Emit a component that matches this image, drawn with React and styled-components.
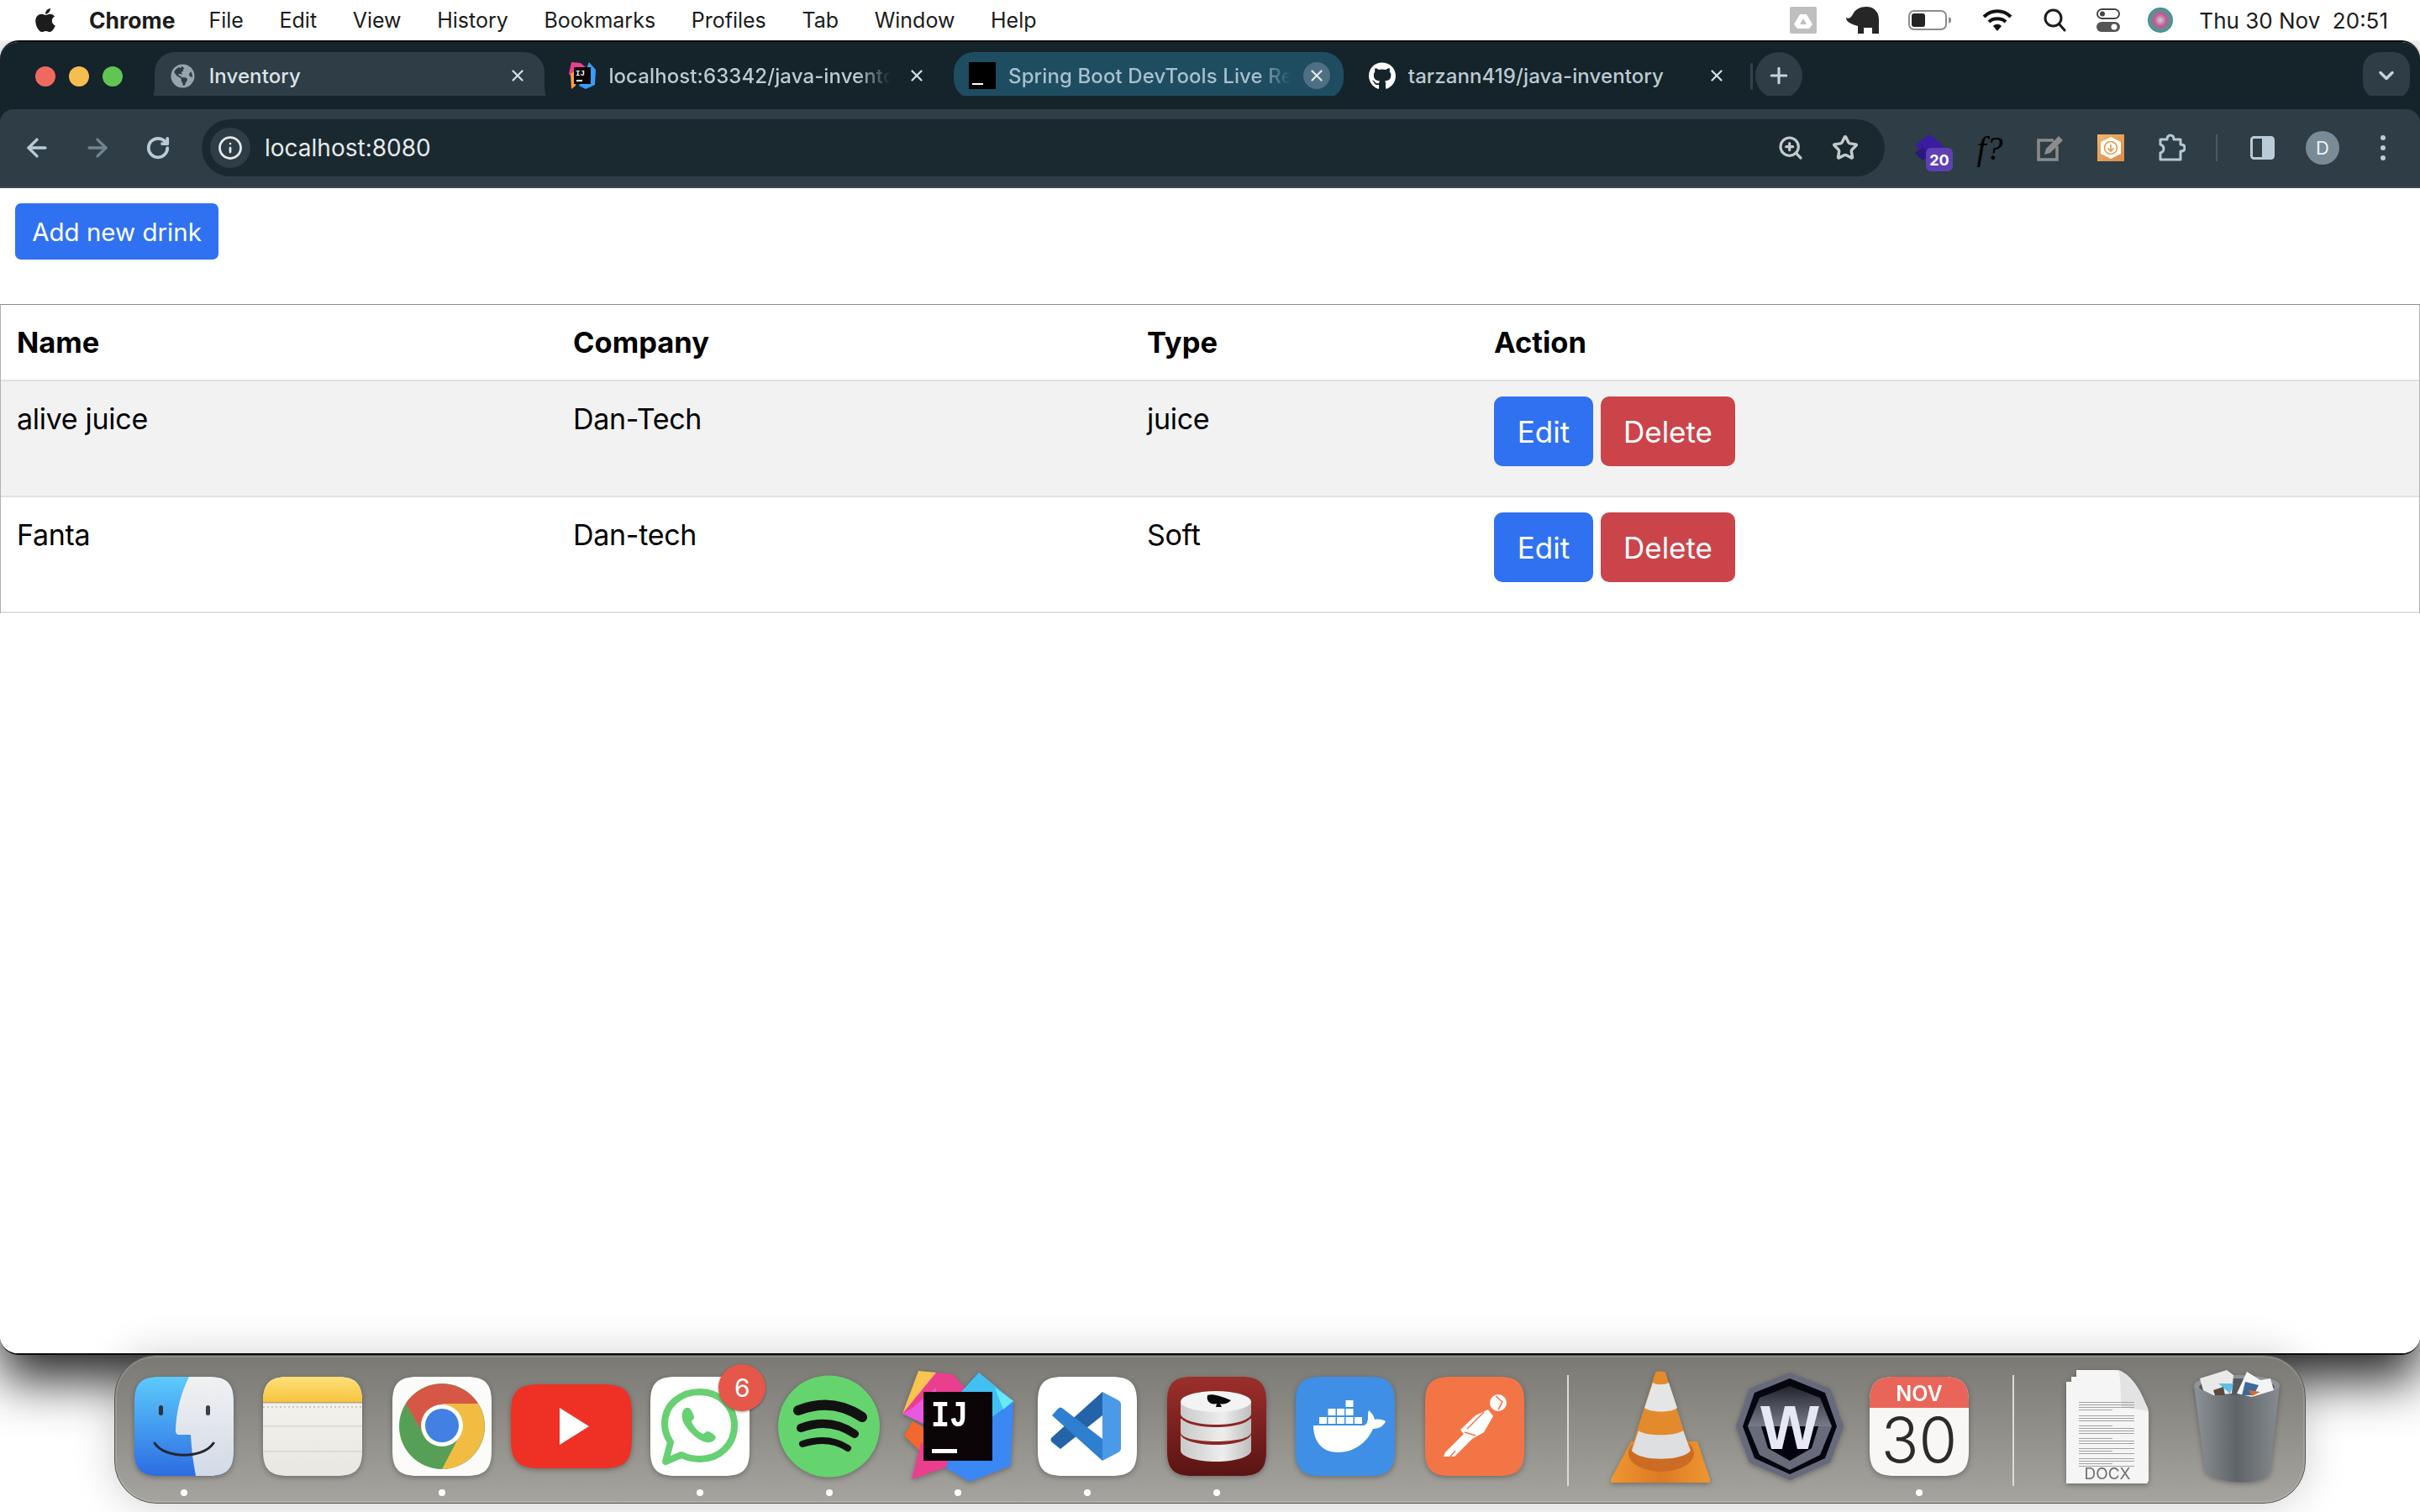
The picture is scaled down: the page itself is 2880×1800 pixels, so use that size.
import React from "react";
import styled, { createGlobalStyle } from "styled-components";
import { FaApple, FaGithub, FaGlobeAmericas } from "react-icons/fa";
import { ArrowLeft, ArrowRight, ChevronDown, Info, Plus, RotateCw, Star, X, ZoomIn } from "lucide-react";

const GlobalStyle = createGlobalStyle`
  html, body {
    margin: 0;
    padding: 0;
    background: #fff;
  }
  * {
    box-sizing: border-box;
  }
`;

const Screen = styled.div`
  width: 2880px;
  height: 1800px;
  display: flex;
  flex-direction: column;
  overflow: hidden;
  background: #fff;
  font-family: Inter, "Liberation Sans", sans-serif;
`;

/* ---------- mac menu bar ---------- */

const MenuBar = styled.div`
  position: relative;
  z-index: 3;
  height: 48px;
  flex: none;
  display: flex;
  align-items: center;
  padding: 0 38px 0 38px;
  background: #fff;
  color: #1c1c1c;
  font-size: 25px;
`;

const AppName = styled.span`
  font-size: 26.5px;
  font-weight: 700;
  margin: 0 40px 0 36px;
`;

const MenuItems = styled.div`
  display: flex;
  gap: 42.6px;
`;

const StatusArea = styled.div`
  margin-left: auto;
  display: flex;
  align-items: center;
`;

const StatusSlot = styled.div`
  width: ${(p) => p.$w}px;
  display: flex;
  justify-content: center;
`;

const Clock = styled.span`
  margin-left: 15px;
  font-size: 26px;
  white-space: pre;
`;

/* ---------- browser window ---------- */

const Window = styled.div`
  position: relative;
  z-index: 1;
  height: 1565px;
  flex: none;
  display: flex;
  flex-direction: column;
  overflow: hidden;
  background: #fff;
  border: 0 solid #0c0c0c;
  border-width: 2px 0;
  border-radius: 22px;
  box-shadow: 0 30px 60px rgba(0, 0, 0, 0.85);
`;

const TabStrip = styled.div`
  height: 80px;
  flex: none;
  display: flex;
  align-items: flex-start;
  gap: 11.7px;
  padding: 12px 12px 0 0;
  background: #15232a;
`;

const Lights = styled.div`
  width: 172px;
  height: 58px;
  flex: none;
  display: flex;
  align-items: center;
  gap: 16px;
  padding-left: 42px;
`;

const Light = styled.span`
  width: 24px;
  height: 24px;
  border-radius: 50%;
  background: ${(p) => p.$color};
`;

const Tab = styled.div`
  position: relative;
  width: 464px;
  height: ${(p) => (p.$active ? 68 : 56)}px;
  padding: ${(p) => (p.$active ? "0 16px 12px 18px" : "0 16px 0 18px")};
  flex: none;
  display: flex;
  align-items: center;
  gap: 15px;
  border-radius: ${(p) => (p.$active ? "24px 24px 0 0" : p.$group ? "24px" : "0")};
  background: ${(p) => (p.$active ? "#2e3d46" : p.$group ? "#1e4d61" : "transparent")};
  color: ${(p) => (p.$active ? "#dde3e6" : p.$group ? "#a8c0cc" : "#bccad1")};

  ${(p) =>
    p.$active &&
    `
    &::before, &::after {
      content: "";
      position: absolute;
      bottom: 0;
      width: 24px;
      height: 24px;
    }
    &::before {
      left: -24px;
      background: radial-gradient(circle at 0 0, transparent 23.5px, #2e3d46 24px);
    }
    &::after {
      right: -24px;
      background: radial-gradient(circle at 100% 0, transparent 23.5px, #2e3d46 24px);
    }
  `}
`;

const FaviconBox = styled.div`
  width: 32px;
  height: 32px;
  flex: none;
  display: flex;
  align-items: center;
  justify-content: center;
`;

const TerminalIcon = styled.div`
  width: 32px;
  height: 32px;
  display: flex;
  align-items: flex-end;
  padding: 0 0 5px 4px;
  background: #000;

  &::after {
    content: "";
    width: 13px;
    height: 2px;
    background: #fff;
  }
`;

const TabTitle = styled.span`
  flex: 1;
  min-width: 0;
  overflow: hidden;
  white-space: nowrap;
  font-size: 24px;
  font-weight: 500;
  letter-spacing: 0.1px;
  ${(p) =>
    p.$fade &&
    `
    -webkit-mask-image: linear-gradient(90deg, #000 88%, transparent 100%);
    mask-image: linear-gradient(90deg, #000 88%, transparent 100%);
  `}
`;

const TabClose = styled.div`
  width: 32px;
  height: 32px;
  flex: none;
  display: flex;
  align-items: center;
  justify-content: center;
  border-radius: 50%;
  background: ${(p) => (p.$on ? "#4f7084" : "transparent")};
  color: ${(p) => (p.$on ? "#dfe7ec" : "#d5dde1")};
`;

const TabDivider = styled.span`
  width: 3px;
  height: 32px;
  flex: none;
  margin: 13px -9px 0 -3px;
  border-radius: 2px;
  background: #33434c;
`;

const RoundButton = styled.div`
  width: ${(p) => p.$w}px;
  height: 56px;
  flex: none;
  display: flex;
  align-items: center;
  justify-content: center;
  border-radius: ${(p) => p.$r}px;
  margin-left: ${(p) => (p.$end ? "auto" : "0")};
  background: #2e3d46;
  color: #c5d3da;
`;

const Toolbar = styled.div`
  position: relative;
  height: 94px;
  flex: none;
  display: flex;
  align-items: center;
  padding: 0 6px 0 8px;
  background: #2e3d46;
  border-radius: 16px 16px 0 0;
  border-bottom: 2px solid #3c4a53;
  box-shadow: 0 -16px 0 #15232a;
`;

const ToolSlot = styled.div`
  width: ${(p) => p.$w || 72}px;
  height: 68px;
  flex: none;
  position: relative;
  display: flex;
  align-items: center;
  justify-content: center;
  color: ${(p) => p.$color || "#b9cbd6"};
`;

const Omnibox = styled.div`
  width: 2003px;
  height: 68px;
  flex: none;
  display: flex;
  align-items: center;
  margin: 0 17px 0 16px;
  padding: 0 31px 0 10px;
  border-radius: 34px;
  background: #1a2930;
  color: #e6eaec;
`;

const InfoChip = styled.div`
  width: 48px;
  height: 48px;
  flex: none;
  display: flex;
  align-items: center;
  justify-content: center;
  border-radius: 50%;
  background: #2e3d46;
`;

const UrlText = styled.span`
  flex: 1;
  margin-left: 17px;
  font-size: 28px;
`;

const OmniIcons = styled.div`
  display: flex;
  align-items: center;
  gap: 33px;
  color: #c3c9cc;
`;

const ExtBadge = styled.span`
  position: absolute;
  left: 32px;
  top: 34px;
  width: 32px;
  height: 28px;
  display: flex;
  align-items: center;
  justify-content: center;
  border-radius: 6px;
  background: #5f3fb4;
  color: #fff;
  font-size: 18px;
  font-weight: 700;
`;

const FormulaIcon = styled.span`
  font-family: "Liberation Serif", serif;
  font-style: italic;
  font-size: 40px;
  color: #000;
`;

const ToolDivider = styled.span`
  width: 2px;
  height: 32px;
  background: #4a5962;
`;

const Avatar = styled.div`
  width: 40px;
  height: 40px;
  display: flex;
  align-items: center;
  justify-content: center;
  border-radius: 50%;
  background: #7a8b98;
  color: #eef2f4;
  font-size: 22px;
`;

const KebabDot = styled.span`
  width: 6px;
  height: 6px;
  border-radius: 50%;
  background: #b9cbd6;
`;

const Kebab = styled.div`
  display: flex;
  flex-direction: column;
  gap: 6px;
`;

/* ---------- page content ---------- */

const Page = styled.main`
  flex: 1;
  background: #fff;
  color: #000;
`;

const AddBar = styled.div`
  padding: 18px 0 53px 18px;
`;

const Btn = styled.button`
  display: inline-flex;
  align-items: center;
  justify-content: center;
  border: 0;
  font-family: inherit;
  color: #fff;
  background: ${(p) => (p.$danger ? "#cb444a" : "#3071f2")};
  height: ${(p) => (p.$large ? 83 : 67)}px;
  width: ${(p) => p.$w}px;
  font-size: ${(p) => (p.$large ? 35 : 29.5)}px;
  border-radius: ${(p) => (p.$large ? 10 : 7)}px;
  margin-right: ${(p) => (p.$gap ? 9 : 0)}px;
  padding: 0;
`;

const Table = styled.table`
  width: 100%;
  table-layout: fixed;
  border-collapse: separate;
  border-spacing: 0;
  border-top: 1px solid #8e8e8e;
  border-left: 1px solid #b0b0b0;
  border-right: 1px solid #b0b0b0;
`;

const Th = styled.th`
  width: ${(p) => p.$w || "auto"};
  padding: 18px 19px;
  text-align: left;
  font-size: 34.5px;
  line-height: 53px;
  font-weight: 700;
  border-bottom: 2px solid #dee2e6;
`;

const Row = styled.tr`
  background: ${(p) => (p.$striped ? "#f2f2f2" : "#fff")};
`;

const Td = styled.td`
  padding: 18px 19px 35px;
  vertical-align: top;
  font-size: 34px;
  letter-spacing: -0.3px;
  line-height: 53px;
  border-bottom: 2px solid #dee2e6;
`;

const Actions = styled.div`
  display: flex;
`;

/* ---------- dock ---------- */

const DockArea = styled.div`
  position: relative;
  z-index: 2;
  flex: none;
  padding: 0 0 0 136px;
`;

const Dock = styled.div`
  width: 2608px;
  height: 177px;
  display: flex;
  padding: 12px 0 0 5px;
  border-radius: 50px;
  background: linear-gradient(180deg, #7a7974, #a5a49f);
  border: 1px solid #55554f;
  box-shadow: inset 0 0 0 2px rgba(255, 255, 255, 0.12), 0 0 50px rgba(0, 0, 0, 0.2);
`;

const DockSlot = styled.div`
  position: relative;
  width: 153.6px;
  height: 164px;
  flex: none;
  display: grid;
  grid-template-rows: 144px 1fr;
  justify-items: center;
  align-items: center;
`;

const Dot = styled.span`
  width: 8px;
  height: 8px;
  border-radius: 50%;
  background: ${(p) => (p.$on ? "#fff" : "transparent")};
  margin-bottom: 6px;
`;

const DockDivider = styled.div`
  width: ${(p) => p.$w}px;
  flex: none;
  height: 132px;
  margin-top: 11px;
  display: flex;
  justify-content: center;

  &::after {
    content: "";
    width: 2px;
    background: #dcdbd6;
  }
`;

const NotifyBadge = styled.span`
  position: absolute;
  left: 99px;
  top: -2px;
  width: 56px;
  height: 56px;
  display: flex;
  align-items: center;
  justify-content: center;
  border-radius: 50%;
  background: #e5574a;
  color: #fff;
  font-size: 30px;
  box-shadow: 0 1px 3px rgba(0, 0, 0, 0.4);
`;

const DockSvg = styled.svg`
  display: block;
  overflow: visible;
  filter: drop-shadow(0 2px 3px rgba(0, 0, 0, 0.3));
`;

const Sq = ({ children, w = 118, h = 118 }) => (
  <DockSvg width={w} height={h} viewBox={`0 0 ${w} ${h}`}>
    {children}
  </DockSvg>
);

const SQUIRCLE = "M30 0H88C110 0 118 8 118 30V88C118 110 110 118 88 118H30C8 118 0 110 0 88V30C0 8 8 0 30 0Z";

const Finder = () => (
  <Sq>
    <defs>
      <linearGradient id="fBlue" x1="0" y1="0" x2="0" y2="1">
        <stop offset="0" stopColor="#5ccbfb" />
        <stop offset="1" stopColor="#2d6ce3" />
      </linearGradient>
      <linearGradient id="fWhite" x1="0" y1="0" x2="0" y2="1">
        <stop offset="0" stopColor="#f1f1f3" />
        <stop offset="1" stopColor="#d1dae7" />
      </linearGradient>
    </defs>
    <path d={SQUIRCLE} fill="url(#fBlue)" />
    <path
      d="M65 0H88C110 0 118 8 118 30V88C118 110 110 118 88 118H73C70 102 68 88 67 69H54C50 69 49 67 49 63C50 40 55 20 65 0Z"
      fill="url(#fWhite)"
    />
    <rect x="29" y="34" width="5" height="12" rx="2.5" fill="#2b3340" />
    <rect x="85" y="34" width="5" height="12" rx="2.5" fill="#3a3f49" />
    <path d="M24 79C36 98 82 98 94 79" fill="none" stroke="#23272f" strokeWidth="3" strokeLinecap="round" />
  </Sq>
);

const Notes = () => (
  <Sq>
    <defs>
      <linearGradient id="nTop" x1="0" y1="0" x2="0" y2="1">
        <stop offset="0" stopColor="#fde07a" />
        <stop offset="1" stopColor="#f8c33d" />
      </linearGradient>
      <linearGradient id="nBody" x1="0" y1="0" x2="0" y2="1">
        <stop offset="0" stopColor="#f6f5f1" />
        <stop offset="1" stopColor="#e9e7e1" />
      </linearGradient>
    </defs>
    <path d={SQUIRCLE} fill="url(#nBody)" />
    <path d="M30 0H88C110 0 118 8 118 30H0C0 8 8 0 30 0Z" fill="url(#nTop)" />
    <rect y="30" width="118" height="1.5" fill="#b0a680" />
    <line x1="0" x2="118" y1="36" y2="36" stroke="#c8c7c2" strokeWidth="2" strokeDasharray="2 3" />
    <rect y="58" width="118" height="1.5" fill="#d8d6d1" />
    <rect y="88" width="118" height="1.5" fill="#d8d6d1" />
  </Sq>
);

const Chrome = () => (
  <Sq>
    <path d={SQUIRCLE} fill="#fbfbfa" />
    <circle cx="59" cy="59" r="51" fill="#55a056" />
    <path d="M16 32A51 51 0 0 1 102 32H59L38 70Z" fill="#d65745" />
    <path d="M102 32A51 51 0 0 1 59 110L80 70L59 32Z" fill="#f2bc42" />
    <circle cx="59" cy="58" r="25" fill="#fff" />
    <circle cx="59" cy="58" r="20" fill="#4380e4" />
  </Sq>
);

const YouTube = () => (
  <Sq w={144} h={100}>
    <path d="M36 0H108C136 0 144 8 144 36V64C144 92 136 100 108 100H36C8 100 0 92 0 64V36C0 8 8 0 36 0Z" fill="#ee3124" />
    <path d="M58 28L93 50L58 72Z" fill="#fff" />
  </Sq>
);

const WhatsApp = () => (
  <Sq>
    <path d={SQUIRCLE} fill="#fff" />
    <path
      d="M18 101L24 78C18 69 17 63 17 56C17 33 36 18 59 18C82 18 100 35 100 58C100 81 82 98 59 98C50 98 43 96 37 93Z"
      fill="none"
      stroke="#67d072"
      strokeWidth="8"
      strokeLinejoin="round"
    />
    <path
      d="M42 37C38 40 37 44 38 50C40 60 55 76 67 78C72 79 77 76 78 72C78 70 70 64 67 65L63 68C58 67 50 58 49 53L52 49C53 47 48 38 46 37Z"
      fill="#67d072"
    />
  </Sq>
);

const Spotify = () => (
  <Sq w={121} h={122}>
    <circle cx="60.5" cy="61" r="60.5" fill="#65d46e" />
    <g fill="none" stroke="#111" strokeLinecap="round">
      <path d="M24 42Q65 26 100 50" strokeWidth="12" />
      <path d="M27 63Q62 50 91 70" strokeWidth="10" />
      <path d="M29 82Q60 72 83 87" strokeWidth="8" />
    </g>
  </Sq>
);

const IntelliJ = () => (
  <Sq w={132} h={132}>
    <polygon points="19,0 40,2 30,50 0,51" fill="#f9c44f" />
    <polygon points="40,2 60,4 77,23 72,60 0,51" fill="#ea3f8e" />
    <polygon points="12,44 40,20 40,70 0,51" fill="#e858e0" />
    <polygon points="2,77 12,60 30,70 25,100" fill="#f2682f" />
    <polygon points="11,129 22,85 60,112" fill="#ea3f8e" />
    <polygon points="91,2 132,36 129,113 80,132 52,116 70,25" fill="#3b88f5" />
    <polygon points="91,2 132,36 100,60 70,25" fill="#42c0f2" />
    <polygon points="132,36 110,20 120,46" fill="#68e8fa" />
    <rect x="25" y="25" width="82" height="82" fill="#0b0508" />
    <text
      x="34"
      y="66"
      fontFamily="Liberation Mono, monospace"
      fontWeight="700"
      fontSize="44"
      fill="#fff"
      textLength="44"
      lengthAdjust="spacingAndGlyphs"
    >
      IJ
    </text>
    <rect x="35" y="93" width="30" height="5" fill="#fff" />
  </Sq>
);

const VsCode = () => (
  <Sq>
    <path d={SQUIRCLE} fill="#fff" />
    <path d="M77 18V46L27 86L17 78C15 76 15 74 17 72Z" fill="#2563a8" />
    <path d="M17 46L24 38C26 36 28 36 30 38L77 74V100Z" fill="#2f7fd0" />
    <path d="M77 18L96 28C98 29 99 31 99 33V85C99 87 98 89 96 90L77 100Z" fill="#4a9ae8" />
  </Sq>
);

const SequelAce = () => (
  <Sq>
    <defs>
      <linearGradient id="sBg" x1="0" y1="0" x2="0" y2="1">
        <stop offset="0" stopColor="#9c2f2b" />
        <stop offset="1" stopColor="#5a1413" />
      </linearGradient>
      <linearGradient id="sCyl" x1="0" y1="0" x2="1" y2="0">
        <stop offset="0" stopColor="#c9c9c9" />
        <stop offset="0.6" stopColor="#eeeeee" />
        <stop offset="1" stopColor="#bdbdbd" />
      </linearGradient>
    </defs>
    <path d={SQUIRCLE} fill="url(#sBg)" />
    <path d="M16 68H100V88C100 95 81 101 58 101C35 101 16 95 16 88Z" fill="url(#sCyl)" />
    <path d="M16 48H100V68C100 75 81 81 58 81C35 81 16 75 16 68Z" fill="#8c2623" />
    <path d="M16 50H100V66C100 73 81 77 58 77C35 77 16 73 16 66Z" fill="url(#sCyl)" />
    <path d="M16 29H100V47C100 54 81 60 58 60C35 60 16 54 16 47Z" fill="#8c2623" />
    <path d="M16 29H100V44C100 51 81 57 58 57C35 57 16 51 16 44Z" fill="url(#sCyl)" />
    <ellipse cx="58" cy="29.5" rx="42" ry="12.5" fill="#f3f3f3" />
    <path d="M48 22C53 20 62 22 76 28C71 33 66 33 63 32L65 36H58L59 32C52 34 46 29 48 22Z" fill="#0a0a0a" />
  </Sq>
);

const Docker = () => (
  <Sq>
    <path d={SQUIRCLE} fill="#3f8fe6" />
    <g fill="#fff">
      {[28, 38.5, 49, 59.5, 70].map((x) => (
        <rect key={x} x={x} y="48" width="9" height="8" />
      ))}
      {[38.5, 49, 59.5].map((x) => (
        <rect key={x} x={x} y="38" width="9" height="8" />
      ))}
      <rect x="59.5" y="28" width="9" height="8" />
      <path d="M21 58H80C84 58 86 54 86 48C86 44 86 42 87 40C91 43 93 47 94 51C99 50 104 51 107 53C104 60 97 62 92 62C85 78 70 90 50 90C30 90 21 75 21 58Z" />
    </g>
  </Sq>
);

const Postman = () => (
  <Sq>
    <path d={SQUIRCLE} fill="#f37546" />
    <circle cx="87" cy="31" r="10" fill="#fff" />
    <path d="M84 23L92 30L87 39" fill="none" stroke="#f37546" strokeWidth="1.6" />
    <polygon points="75,39 81,47 70,66 56,74 35,95 22,95 24,90 46,68 42,63 60,46" fill="#fff" />
    <path d="M50 62L70 42M47 66L60 70M36 88L30 95" fill="none" stroke="#f37546" strokeWidth="1.5" />
  </Sq>
);

const Vlc = () => (
  <Sq w={118} h={133}>
    <defs>
      <linearGradient id="vBase" x1="0" y1="0" x2="1" y2="0">
        <stop offset="0" stopColor="#f0962f" />
        <stop offset="0.5" stopColor="#dc7a25" />
        <stop offset="1" stopColor="#f0962f" />
      </linearGradient>
    </defs>
    <path d="M24 84H103L118 129V133H0V129Z" fill="url(#vBase)" />
    <ellipse cx="60" cy="98" rx="39" ry="22" fill="#cc6b24" />
    <path d="M53 2C53 0 65 0 65 2L94 94C88 106 30 106 24 94Z" fill="#e38a2d" />
    <path d="M50 14C54 17 64 17 69 14L79 44C72 50 48 50 40 44Z" fill="#e4e5e5" />
    <path d="M33 71C40 78 78 78 86 71L95 95C85 108 34 108 25 95Z" fill="#dddfe0" />
  </Sq>
);

const Windscribe = () => (
  <Sq w={128} h={128}>
    <defs>
      <linearGradient id="wIn" x1="0" y1="0" x2="0" y2="1">
        <stop offset="0" stopColor="#23242c" />
        <stop offset="1" stopColor="#777b89" />
      </linearGradient>
    </defs>
    <polygon points="64,0 112,19 128,64 112,107 64,128 16,107 0,64 16,19" fill="#666a7c" />
    <polygon points="64,7 106,24 120,64 106,102 64,121 22,102 8,64 22,24" fill="#05060f" />
    <polygon points="64,16 100,30 114,64 22,64 14,64 28,30" fill="url(#wIn)" />
    <polygon points="14,64 114,64 100,98 64,116 28,98" fill="#676b7a" />
    <polygon points="30,64 98,64 90,90 64,105 38,90" fill="#02030f" />
    <text
      x="64"
      y="91"
      textAnchor="middle"
      fontFamily="Liberation Sans, sans-serif"
      fontWeight="700"
      fontSize="74"
      fill="#e6e9f4"
    >
      W
    </text>
  </Sq>
);

const Calendar = () => (
  <Sq>
    <path d={SQUIRCLE} fill="#f8f7f5" />
    <path d="M30 0H88C110 0 118 8 118 30V37H0V30C0 8 8 0 30 0Z" fill="#e9655a" />
    <text x="59" y="29" textAnchor="middle" fontFamily="Inter, sans-serif" fontWeight="600" fontSize="25" fill="#fff">
      NOV
    </text>
    <text x="59" y="102" textAnchor="middle" fontFamily="Inter, sans-serif" fontWeight="300" fontSize="74" fill="#2b2b2b">
      30
    </text>
  </Sq>
);

const DOC_LINES = [30, 33, 36, 39, 46, 49, 52, 58, 61, 64, 67, 73, 76, 79, 85, 88, 91, 97, 100, 103, 106];

const DocFile = () => (
  <Sq w={98} h={135}>
    <path d="M12 0H60C68 0 76 10 84 24C92 36 98 44 98 50V132L96 135H0V14H6V8H12Z" fill="#f5f5f5" />
    <path d="M62 0C66 14 64 34 66 44C76 46 88 46 98 50C92 30 80 6 62 0Z" fill="#e3e3e3" />
    {DOC_LINES.map((y, i) => (
      <rect key={y} x="15" y={y + 8} width={i % 4 === 3 ? 40 : 66} height="0.9" fill="#9a9a9a" />
    ))}
    <text x="49" y="130" textAnchor="middle" fontFamily="Inter, sans-serif" fontSize="19" fill="#6f6f6f">
      DOCX
    </text>
  </Sq>
);

const Trash = () => (
  <Sq w={104} h={135}>
    <defs>
      <linearGradient id="tBody" x1="0" y1="0" x2="1" y2="0">
        <stop offset="0" stopColor="#8d9297" />
        <stop offset="0.5" stopColor="#5f6469" />
        <stop offset="1" stopColor="#868b90" />
      </linearGradient>
    </defs>
    <path d="M1 18C20 26 84 26 103 18L92 120C88 138 30 138 14 120Z" fill="url(#tBody)" />
    <ellipse cx="52" cy="18" rx="51" ry="12" fill="#8f9499" />
    <ellipse cx="52" cy="20" rx="45" ry="10" fill="#55595d" />
    <path d="M8 10L40 0L48 6L46 28L24 30L12 24Z" fill="#e9e9e9" />
    <path d="M52 28L64 2L80 12L92 10L96 24L70 32Z" fill="#f4f4f4" />
    <path d="M30 16H48L44 28Z" fill="#5bbfe8" />
    <path d="M62 14L78 18L72 30L58 30Z" fill="#3d6a9c" />
    <path d="M66 24L80 26L70 31Z" fill="#d96a2c" />
    <path d="M24 24L36 20L38 30L26 30Z" fill="#5a4a3a" />
  </Sq>
);

const MENU = ["File", "Edit", "View", "History", "Bookmarks", "Profiles", "Tab", "Window", "Help"];

const DOCK_LEFT = [
  { Icon: Finder, on: true },
  { Icon: Notes },
  { Icon: Chrome, on: true },
  { Icon: YouTube },
  { Icon: WhatsApp, on: true, badge: "6" },
  { Icon: Spotify, on: true },
  { Icon: IntelliJ, on: true },
  { Icon: VsCode, on: true },
  { Icon: SequelAce, on: true },
  { Icon: Docker },
  { Icon: Postman },
];

const DockItem = ({ Icon, on, badge }) => (
  <DockSlot>
    <Icon />
    <Dot $on={on} />
    {badge && <NotifyBadge>{badge}</NotifyBadge>}
  </DockSlot>
);

const DRINKS = [
  { name: "alive juice", company: "Dan-Tech", type: "juice" },
  { name: "Fanta", company: "Dan-tech", type: "Soft" },
];

export default function App() {
  return (
    <>
      <GlobalStyle />
      <Screen>
        <MenuBar>
          <FaApple size={32} />
          <AppName>Chrome</AppName>
          <MenuItems>
            {MENU.map((m) => (
              <span key={m}>{m}</span>
            ))}
          </MenuItems>
          <StatusArea>
            <StatusSlot $w={66}>
              <svg width="32" height="32" viewBox="0 0 32 32">
                <rect width="32" height="32" rx="2" fill="#bfbfbf" />
                <path d="M12 9H20L27 21L23 26H9L5 21Z" fill="#fff" />
                <path d="M16 14L20 21H12Z" fill="#bfbfbf" />
              </svg>
            </StatusSlot>
            <StatusSlot $w={74}>
              <svg width="39" height="32" viewBox="0 0 39 32">
                <path
                  d="M0 13C3 15 6 13 8 9C11 3 17 0 24 0C33 0 39 6 39 15V32H31V25H21V32H14V23C9 22 6 20 4 19C2 18 0 16 0 13Z"
                  fill="#262626"
                />
              </svg>
            </StatusSlot>
            <StatusSlot $w={87}>
              <svg width="52" height="24" viewBox="0 0 52 24">
                <rect x="1" y="1" width="44" height="22" rx="6" fill="none" stroke="#8c8c8c" strokeWidth="2" />
                <rect x="4" y="4" width="16" height="16" rx="3" fill="#242424" />
                <path d="M48 8L51 10V14L48 16Z" fill="#8c8c8c" />
              </svg>
            </StatusSlot>
            <StatusSlot $w={73}>
              <svg width="36" height="26" viewBox="0 0 36 26">
                <g fill="none" stroke="#111" strokeWidth="4">
                  <path d="M2 9C11 0 25 0 34 9" />
                  <path d="M8 15C13 10 23 10 28 15" />
                </g>
                <path d="M13 20C16 17 20 17 23 20L18 26Z" fill="#111" />
              </svg>
            </StatusSlot>
            <StatusSlot $w={64}>
              <svg width="27" height="28" viewBox="0 0 27 28">
                <circle cx="11.5" cy="11.5" r="9.5" fill="none" stroke="#1c1c1c" strokeWidth="3" />
                <path d="M18.5 18.5L25 26" stroke="#1c1c1c" strokeWidth="3" strokeLinecap="round" />
              </svg>
            </StatusSlot>
            <StatusSlot $w={63}>
              <svg width="28" height="28" viewBox="0 0 28 28">
                <rect x="1" y="1" width="26" height="11" rx="5.5" fill="none" stroke="#444" strokeWidth="2" />
                <circle cx="7" cy="6.5" r="3" fill="#444" />
                <rect y="16" width="28" height="12" rx="6" fill="#555" />
                <circle cx="21" cy="22" r="3.5" fill="#fff" />
              </svg>
            </StatusSlot>
            <StatusSlot $w={62}>
              <svg width="30" height="30" viewBox="0 0 30 30">
                <defs>
                  <radialGradient id="siri" cx="0.5" cy="0.5" r="0.6">
                    <stop offset="0" stopColor="#c5d4e0" />
                    <stop offset="0.4" stopColor="#c8578f" />
                    <stop offset="0.72" stopColor="#3f9f96" />
                    <stop offset="1" stopColor="#50505c" />
                  </radialGradient>
                </defs>
                <circle cx="15" cy="15" r="15" fill="url(#siri)" />
              </svg>
            </StatusSlot>
            <Clock>Thu 30 Nov  20:51</Clock>
          </StatusArea>
        </MenuBar>

        <Window>
          <TabStrip>
            <Lights>
              <Light $color="#ef6a5e" />
              <Light $color="#f6bd4f" />
              <Light $color="#61c554" />
            </Lights>
            <Tab $active>
              <FaviconBox>
                <FaGlobeAmericas size={29} color="#98a4ab" />
              </FaviconBox>
              <TabTitle>Inventory</TabTitle>
              <TabClose>
                <X size={22} strokeWidth={2.5} />
              </TabClose>
            </Tab>
            <Tab>
              <FaviconBox>
                <svg width="32" height="32" viewBox="0 0 32 32">
                  <polygon points="3,0 14,1 20,6 6,20 0,14" fill="#ea3f8e" />
                  <polygon points="2,14 8,10 8,28 3,32" fill="#f9a13f" />
                  <polygon points="24,0 32,9 31,27 20,32 12,28" fill="#3b9cf5" />
                  <rect x="6" y="6" width="20" height="20" fill="#0b0508" />
                  <rect x="9" y="21" width="7" height="2" fill="#fff" />
                  <text x="8" y="16" fontFamily="Liberation Mono, monospace" fontWeight="700" fontSize="9" fill="#fff">
                    IJ
                  </text>
                </svg>
              </FaviconBox>
              <TabTitle $fade>localhost:63342/java-inventory</TabTitle>
              <TabClose>
                <X size={22} strokeWidth={2.5} />
              </TabClose>
            </Tab>
            <Tab $group>
              <FaviconBox>
                <TerminalIcon />
              </FaviconBox>
              <TabTitle $fade>Spring Boot DevTools Live Reload</TabTitle>
              <TabClose $on>
                <X size={22} strokeWidth={2.5} />
              </TabClose>
            </Tab>
            <Tab>
              <FaviconBox>
                <FaGithub size={33} color="#fff" />
              </FaviconBox>
              <TabTitle>tarzann419/java-inventory</TabTitle>
              <TabClose>
                <X size={22} strokeWidth={2.5} />
              </TabClose>
            </Tab>
            <TabDivider />
            <RoundButton $w={56} $r={28}>
              <Plus size={30} strokeWidth={2.5} />
            </RoundButton>
            <RoundButton $w={56} $r={20} $end>
              <ChevronDown size={28} strokeWidth={3} />
            </RoundButton>
          </TabStrip>

          <Toolbar>
            <ToolSlot>
              <ArrowLeft size={34} strokeWidth={2.4} />
            </ToolSlot>
            <ToolSlot $color="#6f8490">
              <ArrowRight size={34} strokeWidth={2.4} />
            </ToolSlot>
            <ToolSlot>
              <RotateCw size={30} strokeWidth={3} />
            </ToolSlot>
            <Omnibox>
              <InfoChip>
                <Info size={30} strokeWidth={2.2} />
              </InfoChip>
              <UrlText>localhost:8080</UrlText>
              <OmniIcons>
                <ZoomIn size={32} strokeWidth={2.4} />
                <Star size={32} strokeWidth={2.6} />
              </OmniIcons>
            </Omnibox>
            <ToolSlot>
              <svg width="34" height="32" viewBox="0 0 34 32">
                <polygon points="17,0 34,13 17,26 0,13" fill="#3a1ca0" />
                <polygon points="0,22 9,15 18,24 9,31" fill="#2c1680" />
              </svg>
              <ExtBadge>20</ExtBadge>
            </ToolSlot>
            <ToolSlot>
              <FormulaIcon>f?</FormulaIcon>
            </ToolSlot>
            <ToolSlot>
              <svg width="32" height="32" viewBox="0 0 32 32">
                <path d="M20 7H2V30H24V14" fill="none" stroke="#8c8c8c" strokeWidth="3.5" />
                <path d="M9 24L11 17L26 2L31 7L16 22Z" fill="#8c8c8c" />
              </svg>
            </ToolSlot>
            <ToolSlot>
              <svg width="32" height="32" viewBox="0 0 32 32">
                <defs>
                  <linearGradient id="orangeBox" x1="0" y1="0" x2="1" y2="1">
                    <stop offset="0" stopColor="#f0b36c" />
                    <stop offset="1" stopColor="#dc8c4c" />
                  </linearGradient>
                </defs>
                <rect width="32" height="32" fill="url(#orangeBox)" />
                <polygon points="16,3 28,9 28,23 16,29 4,23 4,9" fill="#fff" />
                <circle cx="16" cy="16" r="7.5" fill="none" stroke="#e59a45" strokeWidth="1.6" />
                <path d="M16 12V20M12.5 16.5L16 20L19.5 16.5" fill="none" stroke="#e59a45" strokeWidth="1.6" />
              </svg>
            </ToolSlot>
            <ToolSlot>
              <svg width="34" height="34" viewBox="0 0 34 34">
                <path
                  d="M4 7H12C12 3 14 2 16 2C18 2 20 3 20 7H28V13C32 13 33 15 33 17C33 19 32 21 28 21V31H4V23C7 22 8 20 8 18C8 16 7 14 4 13Z"
                  fill="none"
                  stroke="#b5c8d4"
                  strokeWidth="3"
                  strokeLinejoin="round"
                />
              </svg>
            </ToolSlot>
            <ToolSlot $w={36}>
              <ToolDivider />
            </ToolSlot>
            <ToolSlot>
              <svg width="29" height="28" viewBox="0 0 29 28">
                <rect x="1.5" y="1.5" width="26" height="25" rx="3" fill="none" stroke="#b9cbd6" strokeWidth="3" />
                <rect x="14" y="1" width="14" height="26" fill="#b9cbd6" />
              </svg>
            </ToolSlot>
            <ToolSlot>
              <Avatar>D</Avatar>
            </ToolSlot>
            <ToolSlot>
              <Kebab>
                <KebabDot />
                <KebabDot />
                <KebabDot />
              </Kebab>
            </ToolSlot>
          </Toolbar>

          <Page>
            <AddBar>
              <Btn $w={242}>Add new drink</Btn>
            </AddBar>
            <Table>
              <thead>
                <tr>
                  <Th $w="662px">Name</Th>
                  <Th $w="683px">Company</Th>
                  <Th $w="413px">Type</Th>
                  <Th>Action</Th>
                </tr>
              </thead>
              <tbody>
                {DRINKS.map((d, i) => (
                  <Row key={d.name} $striped={i === 0}>
                    <Td>{d.name}</Td>
                    <Td>{d.company}</Td>
                    <Td>{d.type}</Td>
                    <Td>
                      <Actions>
                        <Btn $large $gap $w={118}>
                          Edit
                        </Btn>
                        <Btn $large $danger $w={160}>
                          Delete
                        </Btn>
                      </Actions>
                    </Td>
                  </Row>
                ))}
              </tbody>
            </Table>
          </Page>
        </Window>

        <DockArea>
          <Dock>
            {DOCK_LEFT.map((item, i) => (
              <DockItem key={i} {...item} />
            ))}
            <DockDivider $w={68} />
            <DockItem Icon={Vlc} />
            <DockItem Icon={Windscribe} />
            <DockItem Icon={Calendar} on />
            <DockDivider $w={71} />
            <DockItem Icon={DocFile} />
            <DockItem Icon={Trash} />
          </Dock>
        </DockArea>
      </Screen>
    </>
  );
}
